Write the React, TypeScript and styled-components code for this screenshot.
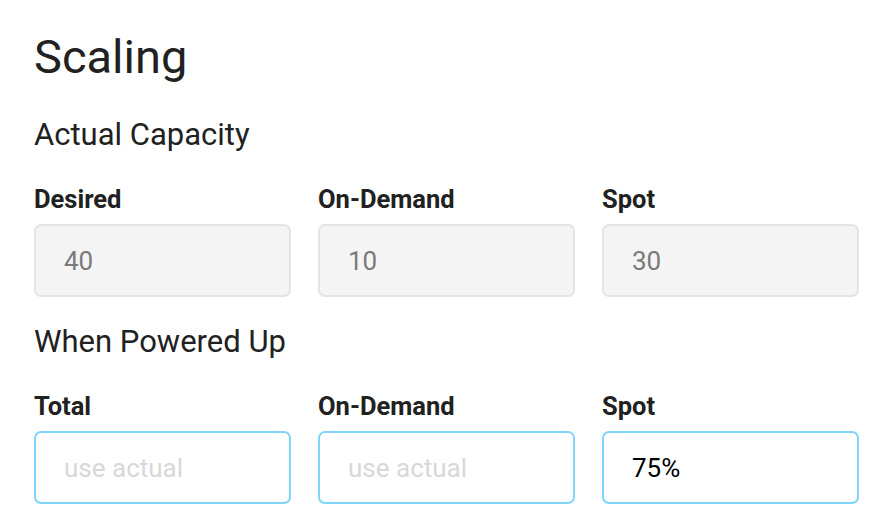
import React from 'react'
import styled, { createGlobalStyle } from 'styled-components'

const GlobalStyle = createGlobalStyle`
  body {
    margin: 0;
    background: #ffffff;
    font-family: Roboto, "Noto Sans", sans-serif;
    color: #212121;
  }
`

const Page = styled.div`
  padding: 25px 21px 0 34px;
`

const Title = styled.h1`
  margin: 0 0 26px;
  font-size: 47px;
  font-weight: 400;
  line-height: 64px;
`

const SectionTitle = styled.h2`
  margin: 0;
  font-size: 31px;
  font-weight: 400;
  line-height: 40px;
`

const FieldRow = styled.div`
  display: grid;
  grid-template-columns: repeat(3, 1fr);
  column-gap: 27px;
  margin: 29px 0 25px;
`

const Field = styled.label`
  display: flex;
  flex-direction: column;
`

const FieldLabel = styled.span`
  font-size: 25.5px;
  font-weight: 700;
  line-height: 30px;
  margin-bottom: 10px;
`

const Input = styled.input<{ $active?: boolean }>`
  box-sizing: border-box;
  width: 100%;
  height: 73px;
  padding: 0 28px;
  border-radius: 7px;
  border: 2px solid ${p => (p.$active ? '#81d4fa' : '#e4e4e4')};
  background: ${p => (p.$active ? '#ffffff' : '#f4f4f4')};
  font-family: Roboto, "Noto Sans", sans-serif;
  font-size: 26px;
  color: #000000;
  outline: none;

  &:disabled {
    color: #7a7a7a;
    -webkit-text-fill-color: #7a7a7a;
    opacity: 1;
  }

  &::placeholder {
    color: #d8d8d8;
  }
`

interface FieldDef {
  label: string
  value?: string
  placeholder?: string
}

const actual: FieldDef[] = [
  { label: 'Desired', value: '40' },
  { label: 'On-Demand', value: '10' },
  { label: 'Spot', value: '30' },
]

const powered: FieldDef[] = [
  { label: 'Total', placeholder: 'use actual' },
  { label: 'On-Demand', placeholder: 'use actual' },
  { label: 'Spot', value: '75%' },
]

const App: React.FC = () => {
  return (
    <>
      <GlobalStyle />
      <Page>
        <Title>Scaling</Title>
        <SectionTitle>Actual Capacity</SectionTitle>
        <FieldRow>
          {actual.map(f => (
            <Field key={f.label}>
              <FieldLabel>{f.label}</FieldLabel>
              <Input disabled value={f.value} readOnly />
            </Field>
          ))}
        </FieldRow>
        <SectionTitle>When Powered Up</SectionTitle>
        <FieldRow>
          {powered.map(f => (
            <Field key={f.label}>
              <FieldLabel>{f.label}</FieldLabel>
              <Input $active placeholder={f.placeholder} defaultValue={f.value} />
            </Field>
          ))}
        </FieldRow>
      </Page>
    </>
  )
}

export default App
